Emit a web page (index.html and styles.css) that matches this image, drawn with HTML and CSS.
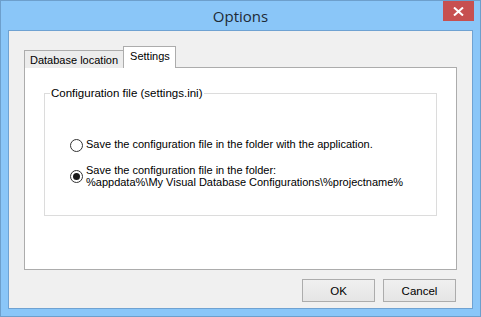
FILE: index.html
```html
<!DOCTYPE html>
<html lang="en">
<head>
    <meta charset="UTF-8">
    <title>Options</title>
    <link rel="stylesheet" href="styles.css">
</head>
<body>
    <div class="window">
        <div class="titlebar">
            <span class="title">Options</span>
            <button class="close-btn">
                <svg width="11" height="9" viewBox="0 0 11 9"><path d="M1 0.5 L10 8.5 M10 0.5 L1 8.5" stroke="#fff" stroke-width="2"/></svg>
            </button>
        </div>
        <div class="client">
            <div class="tabs">
                <div class="tab">Database location</div>
                <div class="tab active">Settings</div>
            </div>
            <div class="tab-panel">
                <fieldset class="group">
                    <legend>Configuration file (settings.ini)</legend>
                    <div class="options">
                        <label class="radio-row">
                            <span class="radio"></span>
                            <span>Save the configuration file in the folder with the application.</span>
                        </label>
                        <label class="radio-row">
                            <span class="radio checked"></span>
                            <span>Save the configuration file in the folder:<br>%appdata%\My Visual Database Configurations\%projectname%</span>
                        </label>
                    </div>
                </fieldset>
            </div>
            <div class="buttons">
                <button class="btn">OK</button>
                <button class="btn">Cancel</button>
            </div>
        </div>
    </div>
</body>
</html>
```
FILE: styles.css
```css
body {
    margin: 0;
    padding: 0;
    font-family: 'Liberation Sans', Arial, sans-serif;
    font-size: 11px;
    color: #000;
}
.window {
    width: 481px;
    height: 317px;
    box-sizing: border-box;
    background: #8ac6f8;
    border: 1px solid #6d9fcc;
    display: flex;
    flex-direction: column;
}
.titlebar {
    height: 29px;
    position: relative;
    display: flex;
    justify-content: center;
    align-items: center;
}
.title {
    font-family: 'Open Sans', 'Noto Sans', sans-serif;
    font-size: 15px;
    color: #1e2a36;
    margin-top: 1px;
}
.close-btn {
    position: absolute;
    top: 0;
    right: 6px;
    width: 31px;
    height: 20px;
    background: #c75050;
    border: none;
    padding: 0;
    display: flex;
    align-items: center;
    justify-content: center;
}
.client {
    margin: 0 7px;
    height: 279px;
    box-sizing: border-box;
    background: #f0f0f0;
    border: 1px solid #6fa2d2;
    padding: 16px 15px 0 15px;
}
.tabs {
    display: flex;
    align-items: flex-end;
    height: 20px;
}
.tab {
    height: 18px;
    box-sizing: border-box;
    padding: 3px 5px 0 5px;
    border: 1px solid #acacac;
    border-bottom: none;
    background: #ececec;
    margin-right: -1px;
    margin-bottom: -1px;
}
.tab.active {
    height: 22px;
    background: #fff;
    padding: 3px 5px 0 6px;
    position: relative;
    z-index: 1;
    margin-bottom: -1px;
}
.tab-panel {
    width: 433px;
    height: 203px;
    box-sizing: border-box;
    background: #fff;
    border: 1px solid #acacac;
    padding: 19px 19px 0 19px;
}
.group {
    margin: 0;
    height: 129px;
    box-sizing: border-box;
    border: 1px solid #dcdcdc;
    padding: 0;
}
.group legend {
    padding: 0 1px;
    margin-left: 5px;
    font-size: 11.5px;
}
.options {
    padding: 39px 0 0 25px;
}
.radio-row {
    display: flex;
    align-items: flex-start;
    gap: 3px;
    margin-bottom: 12px;
    line-height: 12px;
}
.radio {
    width: 11px;
    height: 11px;
    border: 1px solid #333;
    border-radius: 50%;
    box-sizing: content-box;
    background: #fff;
    margin-top: 1px;
    display: flex;
    align-items: center;
    justify-content: center;
    flex-shrink: 0;
}
.radio.checked {
    margin-top: 6px;
}
.radio.checked::after {
    content: "";
    width: 7px;
    height: 7px;
    border-radius: 50%;
    background: #1a1a1a;
}
.buttons {
    display: flex;
    justify-content: flex-end;
    gap: 8px;
    margin-top: 9px;
    margin-right: 1px;
}
.btn {
    width: 73px;
    height: 23px;
    font-family: 'Liberation Sans', Arial, sans-serif;
    font-size: 11.5px;
    background: linear-gradient(#f0f0f0, #e5e5e5);
    border: 1px solid #acacac;
    padding: 0;
}
```
